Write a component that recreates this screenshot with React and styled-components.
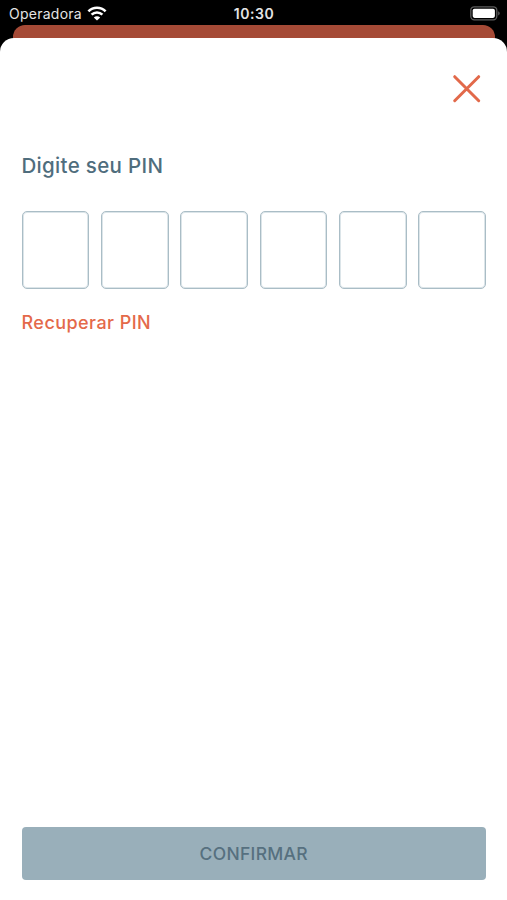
import React, { useState } from 'react';
import styled, { createGlobalStyle } from 'styled-components';

const GlobalStyle = createGlobalStyle`
  * {
    box-sizing: border-box;
  }

  body {
    margin: 0;
    background-color: #000;
    font-family: Inter, "Liberation Sans", sans-serif;
  }
`;

const Screen = styled.div`
  display: flex;
  flex-direction: column;
  height: 900px;
  background-color: #000;
  overflow: hidden;
`;

const StatusBar = styled.header`
  display: grid;
  grid-template-columns: 1fr auto 1fr;
  align-items: center;
  height: 25px;
  padding: 2px 7px 0 9px;
  color: #e4e4e4;
`;

const Carrier = styled.div`
  display: flex;
  align-items: center;
  gap: 5px;
  font-size: 14px;
  line-height: 18px;
  letter-spacing: 0.25px;
`;

const Clock = styled.span`
  margin-right: 1px;
  font-size: 14px;
  font-weight: 600;
  line-height: 18px;
  letter-spacing: 0.5px;
`;

const BatteryIcon = styled.svg`
  justify-self: end;
`;

const BackCard = styled.div`
  height: 32px;
  flex-shrink: 0;
  margin: 0.4px 12px 0 13px;
  border-radius: 12px 12px 0 0;
  background-color: #a54a36;
`;

const Sheet = styled.main`
  display: flex;
  flex-direction: column;
  flex: 1;
  margin-top: -19.9px;
  padding: 32px 21px 20px 21.5px;
  border-radius: 14px 14px 0 0;
  background-color: #fff;
  z-index: 1;
`;

const CloseButton = styled.button`
  display: flex;
  align-self: flex-end;
  padding: 4px 4px 3px 5px;
  border: none;
  background-color: transparent;
  cursor: pointer;
`;

const Title = styled.h1`
  margin: 45px 0 0;
  color: #4f6d7d;
  font-size: 20.5px;
  font-weight: 500;
  line-height: 28px;
  letter-spacing: 0.32px;
`;

const PinRow = styled.div`
  display: grid;
  grid-template-columns: repeat(6, 1fr);
  gap: 11.5px;
  margin-top: 31px;
`;

const PinInput = styled.input`
  width: 100%;
  height: 78px;
  padding: 0;
  border: 1px solid #aabdc6;
  border-radius: 5px;
  box-shadow: inset 0 0 0 1px #dce5e9;
  background-color: #fff;
  color: #4f6d7d;
  font-size: 28px;
  text-align: center;
  outline: none;
`;

const RecoverLink = styled.button`
  align-self: flex-start;
  margin-top: 21px;
  padding: 0;
  border: none;
  background-color: transparent;
  color: #e4694a;
  font-family: inherit;
  font-size: 18px;
  font-weight: 500;
  line-height: 26px;
  letter-spacing: 0.45px;
  cursor: pointer;
`;

const ConfirmButton = styled.button`
  width: 100%;
  height: 53px;
  margin-top: auto;
  padding: 0;
  border: none;
  border-radius: 4px;
  background-color: #99afba;
  color: #56707f;
  font-family: inherit;
  font-size: 17.5px;
  font-weight: 500;
  letter-spacing: 0.3px;
`;

function WifiIcon() {
  return (
    <svg width="20" height="15" viewBox="0 0 20 15" fill="none" stroke="#fff" strokeWidth="2.6">
      <path d="M1.4 5.3C6.2 0.5 13.8 0.5 18.6 5.3" />
      <path d="M4.6 8.7C7.6 5.7 12.4 5.7 15.4 8.7" />
      <path d="M10 14.6L6.8 11.4C8.6 9.7 11.4 9.7 13.2 11.4Z" fill="#fff" stroke="none" />
    </svg>
  );
}

function App() {
  const [pin, setPin] = useState(['', '', '', '', '', '']);

  const handleChange = (index, value) => {
    setPin((prevPin) => prevPin.map((digit, i) => (i === index ? value : digit)));
  };

  return (
    <>
      <GlobalStyle />
      <Screen>
        <StatusBar>
          <Carrier>
            Operadora
            <WifiIcon />
          </Carrier>
          <Clock>10:30</Clock>
          <BatteryIcon width="30" height="15" viewBox="0 0 30 15">
            <rect x="0.8" y="0.8" width="26" height="13" rx="3.5" fill="none" stroke="#5c5c5c" strokeWidth="1.3" />
            <rect x="2.7" y="2.7" width="22.2" height="9.2" rx="1.8" fill="#fff" />
            <path d="M28.2 5.2C30.2 6 30.2 8.6 28.2 9.4Z" fill="#5c5c5c" />
          </BatteryIcon>
        </StatusBar>
        <BackCard />
        <Sheet>
          <CloseButton aria-label="Fechar">
            <svg width="30" height="30" viewBox="0 0 30 30" fill="none" stroke="#e2694a" strokeWidth="3" strokeLinecap="round">
              <path d="M2.7 2.7L26.7 26.7M26.7 2.7L2.7 26.7" />
            </svg>
          </CloseButton>
          <Title>Digite seu PIN</Title>
          <PinRow>
            {pin.map((digit, index) => (
              <PinInput
                key={index}
                type="password"
                inputMode="numeric"
                maxLength={1}
                value={digit}
                onChange={(e) => handleChange(index, e.target.value)}
              />
            ))}
          </PinRow>
          <RecoverLink>Recuperar PIN</RecoverLink>
          <ConfirmButton disabled>CONFIRMAR</ConfirmButton>
        </Sheet>
      </Screen>
    </>
  );
}

export default App;
